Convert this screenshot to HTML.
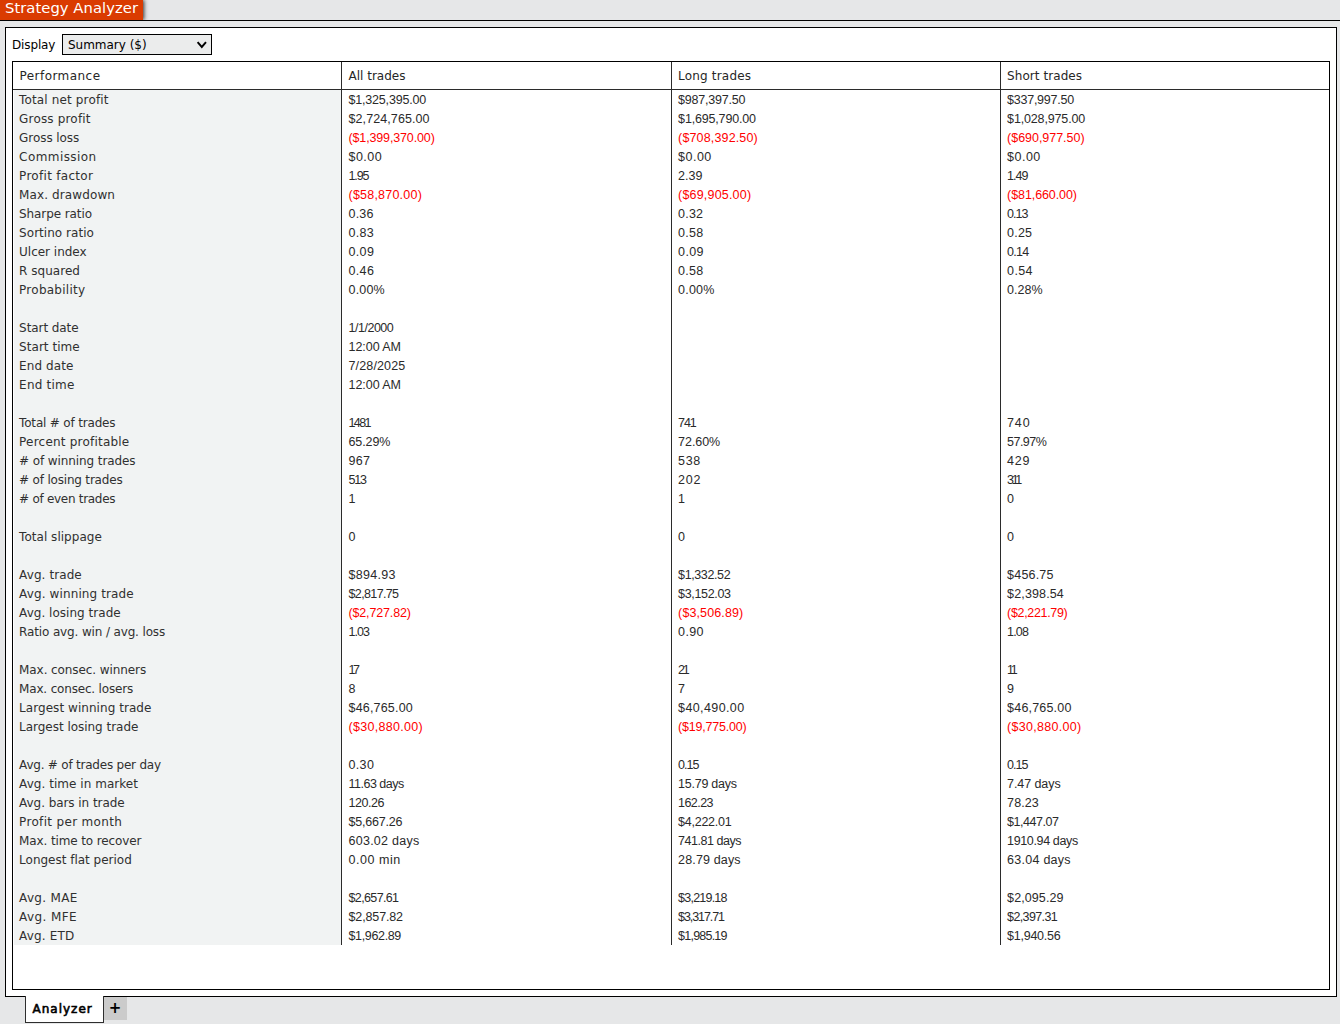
<!DOCTYPE html>
<html lang="en"><head><meta charset="utf-8"><title>Strategy Analyzer</title>
<style>
html,body{margin:0;padding:0}
body{width:1340px;height:1024px;overflow:hidden;background:#e6e7e8;position:relative;color:#000;
 font-family:'DejaVu Sans','Liberation Sans',sans-serif;font-size:12px}
*{box-sizing:border-box}
#title{position:absolute;left:0;top:0;width:143px;height:20px;background:#da3b01;color:#fff;font-size:14.8px;line-height:20px;
 padding-left:5px;white-space:nowrap;box-shadow:1px 0 4px rgba(0,0,0,.8);clip-path:inset(0 -6px 0 0)}
#title span{position:relative;top:-2px}
#topline{position:absolute;left:0;top:20px;width:1340px;height:1px;background:#000}
#panel{position:absolute;left:5px;top:27px;width:1332px;height:970px;background:#fff;border:1px solid #000}
#disp{position:absolute;left:6px;top:7px;height:21px;line-height:21px;white-space:nowrap}
#sel{position:absolute;left:56px;top:6px;width:150px;height:21px;border:1px solid #000;background:#ebecec;line-height:21px;padding-left:5px;white-space:nowrap}
#sel svg{position:absolute;left:133px;top:5px}
#tbl{position:absolute;left:6px;top:33px;width:1318px;height:929px;border:1px solid #000;background:#fff}
#hdr{position:absolute;left:0;top:0;width:1316px;height:28px;border-bottom:1px solid #2b2b2b}
#labbg{position:absolute;left:1px;top:28px;width:327px;height:855px;background:#f1f3f3}
.vd{position:absolute;top:0;width:1px;height:883px;background:#2b2b2b}
.row{position:absolute;left:0;width:1316px;height:19px;line-height:21px;white-space:nowrap}
.h{position:absolute;top:0;height:27px;line-height:29px;white-space:nowrap;color:#262626}
.c0,.c1,.c2,.c3{position:absolute;top:0;white-space:pre}
.c0{left:6.1px;color:#303030}
.c1,.c2,.c3{font-family:'Liberation Sans','DejaVu Sans',sans-serif;font-size:12.5px;color:#2a2a2a}
.c1{left:335.5px}.c2{left:665.1px}.c3{left:994.1px}
.r{color:#f00}
#tab{position:absolute;left:25px;top:996px;width:79px;height:27px;font-size:12.01px;-webkit-text-stroke:0.6px #000;background:#fff;border:1px solid #2e2e2e;border-top:0;
 line-height:27px;padding-left:6.5px;white-space:nowrap}
#plus{position:absolute;left:104px;top:997px;width:23px;height:23px;background:#cbcbcb}
#plus span{position:absolute;left:-0.5px;top:0;width:23px;height:23px;line-height:22px;text-align:center;font-weight:bold;font-size:15px}
</style></head><body>
<div id="title"><span style="letter-spacing:0.03px">Strategy Analyzer</span></div>
<div id="topline"></div>
<div id="panel">
<div id="disp"><span style="letter-spacing:-0.14px">Display</span></div>
<div id="sel"><span style="letter-spacing:-0.02px">Summary ($)</span><svg width="12" height="10" viewBox="0 0 12 10"><path d="M1.6 2.2 L5.8 7 L10 2.2" fill="none" stroke="#000" stroke-width="1.9"/></svg></div>
<div id="tbl">
<div id="labbg"></div>
<div id="hdr">
<div class="h" style="left:6.5px;letter-spacing:0.45px">Performance</div>
<div class="h" style="left:335.5px">All trades</div>
<div class="h" style="left:665.1px;letter-spacing:0.18px">Long trades</div>
<div class="h" style="left:994.1px;letter-spacing:0.06px">Short trades</div>
</div>
<div class="vd" style="left:328px"></div><div class="vd" style="left:658px"></div><div class="vd" style="left:987px"></div>
<div class="row" style="top:28px"><span class="c0" style="letter-spacing:0.14px">Total net profit</span><span class="c1" style="letter-spacing:-0.19px">$1,325,395.00</span><span class="c2" style="letter-spacing:-0.22px">$987,397.50</span><span class="c3" style="letter-spacing:-0.25px">$337,997.50</span></div>
<div class="row" style="top:47px"><span class="c0" style="letter-spacing:0.17px">Gross profit</span><span class="c1" style="letter-spacing:0.09px">$2,724,765.00</span><span class="c2" style="letter-spacing:-0.17px">$1,695,790.00</span><span class="c3" style="letter-spacing:-0.15px">$1,028,975.00</span></div>
<div class="row" style="top:66px"><span class="c0" style="letter-spacing:-0.07px">Gross loss</span><span class="c1 r" style="letter-spacing:-0.14px">($1,399,370.00)</span><span class="c2 r" style="letter-spacing:0.15px">($708,392.50)</span><span class="c3 r" style="letter-spacing:-0.03px">($690,977.50)</span></div>
<div class="row" style="top:85px"><span class="c0" style="letter-spacing:0.43px">Commission</span><span class="c1" style="letter-spacing:0.48px">$0.00</span><span class="c2" style="letter-spacing:0.48px">$0.00</span><span class="c3" style="letter-spacing:0.48px">$0.00</span></div>
<div class="row" style="top:104px"><span class="c0" style="letter-spacing:0.29px">Profit factor</span><span class="c1" style="letter-spacing:-1.11px">1.95</span><span class="c2" style="letter-spacing:0.02px">2.39</span><span class="c3" style="letter-spacing:-0.95px">1.49</span></div>
<div class="row" style="top:123px"><span class="c0" style="letter-spacing:0.11px">Max. drawdown</span><span class="c1 r" style="letter-spacing:0.22px">($58,870.00)</span><span class="c2 r" style="letter-spacing:0.19px">($69,905.00)</span><span class="c3 r" style="letter-spacing:-0.09px">($81,660.00)</span></div>
<div class="row" style="top:142px"><span class="c0" style="letter-spacing:-0.1px">Sharpe ratio</span><span class="c1" style="letter-spacing:0.19px">0.36</span><span class="c2" style="letter-spacing:0.19px">0.32</span><span class="c3" style="letter-spacing:-0.95px">0.13</span></div>
<div class="row" style="top:161px"><span class="c0" style="letter-spacing:0.04px">Sortino ratio</span><span class="c1" style="letter-spacing:0.29px">0.83</span><span class="c2" style="letter-spacing:0.29px">0.58</span><span class="c3" style="letter-spacing:0.19px">0.25</span></div>
<div class="row" style="top:180px"><span class="c0" style="letter-spacing:-0.02px">Ulcer index</span><span class="c1" style="letter-spacing:0.35px">0.09</span><span class="c2" style="letter-spacing:0.35px">0.09</span><span class="c3" style="letter-spacing:-0.78px">0.14</span></div>
<div class="row" style="top:199px"><span class="c0" style="letter-spacing:0.03px">R squared</span><span class="c1" style="letter-spacing:0.35px">0.46</span><span class="c2" style="letter-spacing:0.29px">0.58</span><span class="c3" style="letter-spacing:0.35px">0.54</span></div>
<div class="row" style="top:218px"><span class="c0" style="letter-spacing:0.25px">Probability</span><span class="c1" style="letter-spacing:0.19px">0.00%</span><span class="c2" style="letter-spacing:0.19px">0.00%</span><span class="c3" style="letter-spacing:0.01px">0.28%</span></div>
<div class="row" style="top:256px"><span class="c0" style="letter-spacing:-0.08px">Start date</span><span class="c1" style="letter-spacing:-0.48px">1/1/2000</span></div>
<div class="row" style="top:275px"><span class="c0" style="letter-spacing:0.04px">Start time</span><span class="c1" style="letter-spacing:-0.05px">12:00 AM</span></div>
<div class="row" style="top:294px"><span class="c0" style="letter-spacing:0.1px">End date</span><span class="c1" style="letter-spacing:0.14px">7/28/2025</span></div>
<div class="row" style="top:313px"><span class="c0" style="letter-spacing:0.22px">End time</span><span class="c1" style="letter-spacing:-0.05px">12:00 AM</span></div>
<div class="row" style="top:351px"><span class="c0" style="letter-spacing:-0.18px">Total # of trades</span><span class="c1" style="letter-spacing:-1.6px">1481</span><span class="c2" style="letter-spacing:-1.13px">741</span><span class="c3" style="letter-spacing:0.82px">740</span></div>
<div class="row" style="top:370px"><span class="c0" style="letter-spacing:0.21px">Percent profitable</span><span class="c1" style="letter-spacing:-0.1px">65.29%</span><span class="c2" style="letter-spacing:-0.06px">72.60%</span><span class="c3" style="letter-spacing:-0.54px">57.97%</span></div>
<div class="row" style="top:389px"><span class="c0" style="letter-spacing:-0.1px"># of winning trades</span><span class="c1" style="letter-spacing:0.32px">967</span><span class="c2" style="letter-spacing:0.62px">538</span><span class="c3" style="letter-spacing:0.72px">429</span></div>
<div class="row" style="top:408px"><span class="c0" style="letter-spacing:-0.19px"># of losing trades</span><span class="c1" style="letter-spacing:-1.23px">513</span><span class="c2" style="letter-spacing:0.72px">202</span><span class="c3" style="letter-spacing:-2.4px">311</span></div>
<div class="row" style="top:427px"><span class="c0" style="letter-spacing:-0.29px"># of even trades</span><span class="c1" style="letter-spacing:-2.4px">1</span><span class="c2" style="letter-spacing:-2.4px">1</span><span class="c3" style="letter-spacing:0.95px">0</span></div>
<div class="row" style="top:465px"><span class="c0" style="letter-spacing:0.03px">Total slippage</span><span class="c1" style="letter-spacing:0.95px">0</span><span class="c2" style="letter-spacing:0.95px">0</span><span class="c3" style="letter-spacing:0.95px">0</span></div>
<div class="row" style="top:503px"><span class="c0" style="letter-spacing:0.09px">Avg. trade</span><span class="c1" style="letter-spacing:0.29px">$894.93</span><span class="c2" style="letter-spacing:-0.39px">$1,332.52</span><span class="c3" style="letter-spacing:0.19px">$456.75</span></div>
<div class="row" style="top:522px"><span class="c0" style="letter-spacing:0.12px">Avg. winning trade</span><span class="c1" style="letter-spacing:-0.63px">$2,817.75</span><span class="c2" style="letter-spacing:-0.33px">$3,152.03</span><span class="c3" style="letter-spacing:0.14px">$2,398.54</span></div>
<div class="row" style="top:541px"><span class="c0" style="letter-spacing:0.03px">Avg. losing trade</span><span class="c1 r" style="letter-spacing:-0.15px">($2,727.82)</span><span class="c2 r" style="letter-spacing:0.12px">($3,506.89)</span><span class="c3 r" style="letter-spacing:-0.33px">($2,221.79)</span></div>
<div class="row" style="top:560px"><span class="c0" style="letter-spacing:-0.14px">Ratio avg. win / avg. loss</span><span class="c1" style="letter-spacing:-0.95px">1.03</span><span class="c2" style="letter-spacing:0.35px">0.90</span><span class="c3" style="letter-spacing:-0.85px">1.08</span></div>
<div class="row" style="top:598px"><span class="c0" style="letter-spacing:-0.09px">Max. consec. winners</span><span class="c1" style="letter-spacing:-2.4px">17</span><span class="c2" style="letter-spacing:-2.4px">21</span><span class="c3" style="letter-spacing:-2.4px">11</span></div>
<div class="row" style="top:617px"><span class="c0" style="letter-spacing:-0.18px">Max. consec. losers</span><span class="c1" style="letter-spacing:0.75px">8</span><span class="c2" style="letter-spacing:0.15px">7</span><span class="c3" style="letter-spacing:0.45px">9</span></div>
<div class="row" style="top:636px"><span class="c0" style="letter-spacing:0.05px">Largest winning trade</span><span class="c1" style="letter-spacing:0.19px">$46,765.00</span><span class="c2" style="letter-spacing:0.39px">$40,490.00</span><span class="c3" style="letter-spacing:0.19px">$46,765.00</span></div>
<div class="row" style="top:655px"><span class="c0" style="letter-spacing:-0.03px">Largest losing trade</span><span class="c1 r" style="letter-spacing:0.29px">($30,880.00)</span><span class="c2 r" style="letter-spacing:-0.22px">($19,775.00)</span><span class="c3 r" style="letter-spacing:0.29px">($30,880.00)</span></div>
<div class="row" style="top:693px"><span class="c0" style="letter-spacing:-0.22px">Avg. # of trades per day</span><span class="c1" style="letter-spacing:0.35px">0.30</span><span class="c2" style="letter-spacing:-0.95px">0.15</span><span class="c3" style="letter-spacing:-0.95px">0.15</span></div>
<div class="row" style="top:712px"><span class="c0" style="letter-spacing:0.04px">Avg. time in market</span><span class="c1" style="letter-spacing:-0.5px">11.63 days</span><span class="c2" style="letter-spacing:-0.26px">15.79 days</span><span class="c3" style="letter-spacing:-0.08px">7.47 days</span></div>
<div class="row" style="top:731px"><span class="c0" style="letter-spacing:-0.06px">Avg. bars in trade</span><span class="c1" style="letter-spacing:-0.47px">120.26</span><span class="c2" style="letter-spacing:-0.57px">162.23</span><span class="c3" style="letter-spacing:0.08px">78.23</span></div>
<div class="row" style="top:750px"><span class="c0" style="letter-spacing:0.33px">Profit per month</span><span class="c1" style="letter-spacing:-0.2px">$5,667.26</span><span class="c2" style="letter-spacing:-0.26px">$4,222.01</span><span class="c3" style="letter-spacing:-0.48px">$1,447.07</span></div>
<div class="row" style="top:769px"><span class="c0" style="letter-spacing:-0.12px">Max. time to recover</span><span class="c1" style="letter-spacing:0.26px">603.02 days</span><span class="c2" style="letter-spacing:-0.47px">741.81 days</span><span class="c3" style="letter-spacing:-0.36px">1910.94 days</span></div>
<div class="row" style="top:788px"><span class="c0" style="letter-spacing:-0.01px">Longest flat period</span><span class="c1" style="letter-spacing:0.55px">0.00 min</span><span class="c2" style="letter-spacing:0.15px">28.79 days</span><span class="c3" style="letter-spacing:0.26px">63.04 days</span></div>
<div class="row" style="top:826px"><span class="c0" style="letter-spacing:0.33px">Avg. MAE</span><span class="c1" style="letter-spacing:-0.63px">$2,657.61</span><span class="c2" style="letter-spacing:-0.78px">$3,219.18</span><span class="c3" style="letter-spacing:0.1px">$2,095.29</span></div>
<div class="row" style="top:845px"><span class="c0" style="letter-spacing:0.4px">Avg. MFE</span><span class="c1" style="letter-spacing:-0.13px">$2,857.82</span><span class="c2" style="letter-spacing:-1.09px">$3,317.71</span><span class="c3" style="letter-spacing:-0.63px">$2,397.31</span></div>
<div class="row" style="top:864px"><span class="c0" style="letter-spacing:0.18px">Avg. ETD</span><span class="c1" style="letter-spacing:-0.35px">$1,962.89</span><span class="c2" style="letter-spacing:-0.78px">$1,985.19</span><span class="c3" style="letter-spacing:-0.26px">$1,940.56</span></div>
</div>
</div>
<div id="tab"><span style="letter-spacing:1.0px">Analyzer</span></div>
<div id="plus"><span>+</span></div>
</body></html>
